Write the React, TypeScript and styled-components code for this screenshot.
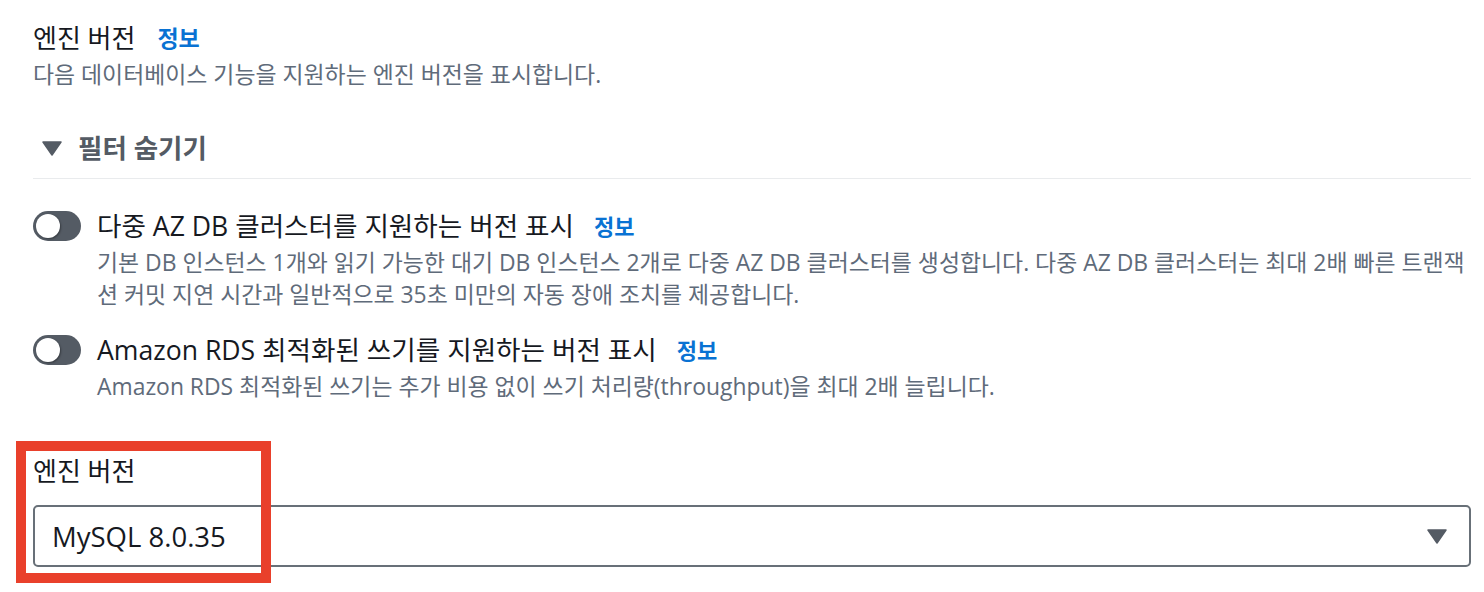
import React from "react";
import styled, { createGlobalStyle } from "styled-components";

const Global = createGlobalStyle`
  html, body { margin: 0; padding: 0; background: #ffffff; }
  body {
    font-family: "Open Sans", "Noto Sans CJK KR", sans-serif;
    -webkit-font-smoothing: antialiased;
  }
`;

const Page = styled.div`
  position: relative;
  width: 1484px;
  height: 592px;
  box-sizing: border-box;
  padding: 22px 13px 0 33px;
  overflow: hidden;
`;

const HeaderRow = styled.div`
  display: flex;
  align-items: center;
  gap: 22px;
  height: 32px;
`;

const Heading = styled.span`
  font-size: 26px;
  line-height: 32px;
  color: #16191f;
`;

const InfoLink = styled.a<{ $size?: number }>`
  font-size: ${(p) => p.$size ?? 23}px;
  line-height: 32px;
  font-weight: 700;
  color: #0972d3;
  text-decoration: none;
`;

const Description = styled.div<{ $top?: number }>`
  margin-top: ${(p) => p.$top ?? 5}px;
  font-size: 22.9px;
  line-height: 32px;
  color: #5f6b7a;
`;

const FilterToggle = styled.div`
  margin-top: 41px;
  display: flex;
  align-items: center;
  gap: 16px;
  height: 32px;
  padding: 0 0 14px 9px;
  border-bottom: 1px solid #e9ebed;
`;

const Caret = styled.svg`
  flex: none;
  display: block;
`;

const FilterText = styled.span`
  font-size: 26.5px;
  line-height: 32px;
  font-weight: 700;
  color: #545b64;
`;

const ToggleRow = styled.div<{ $top: number }>`
  margin-top: ${(p) => p.$top}px;
  display: grid;
  grid-template-columns: 48px 1fr;
  column-gap: 16px;
`;

const Switch = styled.div`
  width: 48px;
  height: 30px;
  border-radius: 15px;
  background: #545b64;
  margin-top: 1px;
  box-sizing: border-box;
  padding: 3px;
`;

const Knob = styled.div`
  width: 24px;
  height: 24px;
  border-radius: 50%;
  background: #ffffff;
  box-shadow: 1px 1px 2px rgba(0, 0, 0, 0.35);
`;

const ToggleBody = styled.div``;

const ToggleLabel = styled.div`
  display: flex;
  align-items: center;
  gap: 20px;
  height: 32px;
`;

const LabelText = styled.span`
  font-size: 26.6px;
  line-height: 32px;
  color: #16191f;
`;

const Field = styled.div`
  margin-top: 52px;
`;

const FieldLabel = styled.div`
  font-size: 26px;
  line-height: 32px;
  color: #16191f;
`;

const Select = styled.div`
  margin-top: 18px;
  height: 62px;
  box-sizing: border-box;
  border: 2px solid #687078;
  border-radius: 5px;
  display: flex;
  align-items: center;
  justify-content: space-between;
  padding: 0 22px 0 17px;
`;

const SelectValue = styled.span`
  font-size: 27.5px;
  color: #16191f;
`;

const Highlight = styled.div`
  position: absolute;
  left: 16px;
  top: 441px;
  width: 255px;
  height: 142px;
  box-sizing: border-box;
  border: 10px solid #e9402b;
  pointer-events: none;
`;

const DownTriangle: React.FC<{ w: number; h: number }> = ({ w, h }) => (
  <Caret width={w} height={h} viewBox={`0 0 ${w} ${h}`}>
    <path d={`M1 1 L${w - 1} 1 L${w / 2} ${h - 1} Z`} fill="#545b64" stroke="#545b64" strokeWidth="1.5" strokeLinejoin="round" />
  </Caret>
);

const Toggle: React.FC<{ label: string; desc: string; top: number }> = ({ label, desc, top }) => (
  <ToggleRow $top={top}>
    <Switch>
      <Knob />
    </Switch>
    <ToggleBody>
      <ToggleLabel>
        <LabelText>{label}</LabelText>
        <InfoLink $size={22} href="#">정보</InfoLink>
      </ToggleLabel>
      <Description>{desc}</Description>
    </ToggleBody>
  </ToggleRow>
);

export default function App() {
  return (
    <>
      <Global />
      <Page>
        <HeaderRow>
          <Heading>엔진 버전</Heading>
          <InfoLink href="#">정보</InfoLink>
        </HeaderRow>
        <Description>다음 데이터베이스 기능을 지원하는 엔진 버전을 표시합니다.</Description>
        <FilterToggle>
          <DownTriangle w={20} h={15} />
          <FilterText>필터 숨기기</FilterText>
        </FilterToggle>
        <Toggle
          top={31}
          label="다중 AZ DB 클러스터를 지원하는 버전 표시"
          desc="기본 DB 인스턴스 1개와 읽기 가능한 대기 DB 인스턴스 2개로 다중 AZ DB 클러스터를 생성합니다. 다중 AZ DB 클러스터는 최대 2배 빠른 트랜잭션 커밋 지연 시간과 일반적으로 35초 미만의 자동 장애 조치를 제공합니다."
        />
        <Toggle
          top={23}
          label="Amazon RDS 최적화된 쓰기를 지원하는 버전 표시"
          desc="Amazon RDS 최적화된 쓰기는 추가 비용 없이 쓰기 처리량(throughput)을 최대 2배 늘립니다."
        />
        <Field>
          <FieldLabel>엔진 버전</FieldLabel>
          <Select>
            <SelectValue>MySQL 8.0.35</SelectValue>
            <DownTriangle w={20} h={15} />
          </Select>
        </Field>
        <Highlight />
      </Page>
    </>
  );
}
